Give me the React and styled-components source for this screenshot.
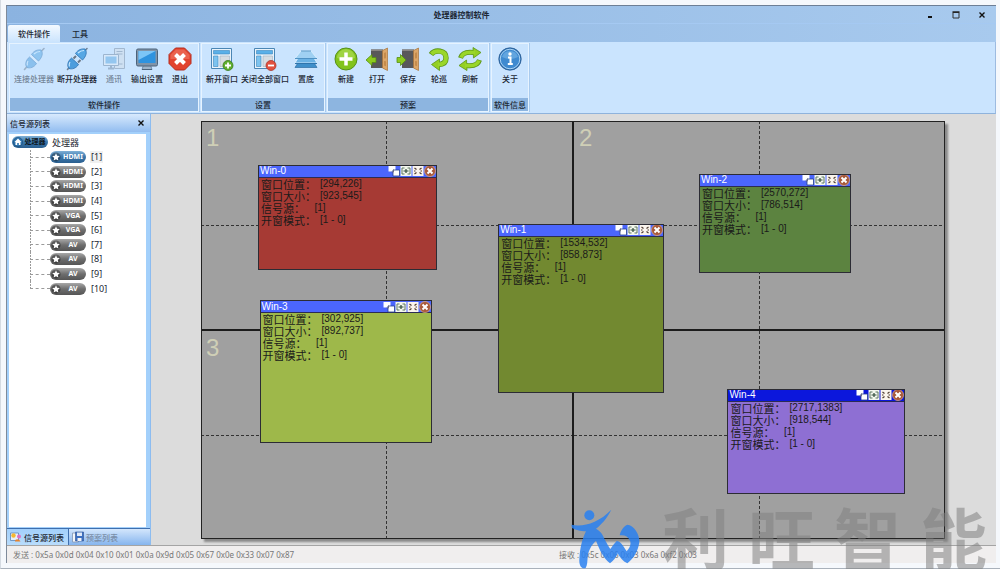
import { useState } from 'react';
import styled, { createGlobalStyle, css } from 'styled-components';

const WALL = { width: 3840, height: 2160 };

const GROUPS = [
  {
    title: '软件操作',
    actions: [
      { label: '连接处理器', icon: <PlugIcon joined />, disabled: true },
      { label: '断开处理器', icon: <PlugIcon /> },
      { label: '通讯', icon: <ComputerIcon />, disabled: true },
      { label: '输出设置', icon: <MonitorIcon /> },
      { label: '退出', icon: <ExitIcon /> },
    ],
  },
  {
    title: '设置',
    actions: [
      { label: '新开窗口', icon: <LayoutIcon add /> },
      { label: '关闭全部窗口', icon: <LayoutIcon /> },
      { label: '置底', icon: <LayersIcon /> },
    ],
  },
  {
    title: '预案',
    actions: [
      { label: '新建', icon: <AddIcon /> },
      { label: '打开', icon: <DoorIcon arrow="M1 13 L7 7.500 V10.500 H11 V15.500 H7 V18.500 Z" /> },
      { label: '保存', icon: <DoorIcon arrow="M10 13 L4.500 7.500 V10.500 H1 V15.500 H4.500 V18.500 Z" /> },
      { label: '轮巡', icon: <CycleIcon /> },
      { label: '刷新', icon: <RefreshIcon /> },
    ],
  },
  { title: '软件信息', actions: [{ label: '关于', icon: <InfoIcon /> }] },
];

const SOURCES = ['HDMI', 'HDMI', 'HDMI', 'HDMI', 'VGA', 'VGA', 'AV', 'AV', 'AV', 'AV'];

const WINDOWS = [
  { name: 'Win-0', x: 294, y: 226, w: 923, h: 545, color: '#a63a34' },
  { name: 'Win-2', x: 2570, y: 272, w: 786, h: 514, color: '#5c8340' },
  { name: 'Win-1', x: 1534, y: 532, w: 858, h: 873, color: '#728930' },
  { name: 'Win-3', x: 302, y: 925, w: 892, h: 737, color: '#9eb84a' },
  { name: 'Win-4', x: 2717, y: 1383, w: 918, h: 544, color: '#8e6fd3' },
];

export default function App() {
  const [tab, setTab] = useState('软件操作');
  const [source, setSource] = useState(0);
  const [active, setActive] = useState('Win-4');

  return (
    <>
      <GlobalStyle />
      <Desktop>
        <Shell>
          <TitleBar>
            <Title>处理器控制软件</Title>
            <TitleButtons>
              <TitleButton aria-label="最小化">
                <svg width="8" height="8">
                  <path d="M2 6h4" stroke="#111" strokeWidth="2" />
                </svg>
              </TitleButton>
              <TitleButton aria-label="最大化">
                <svg width="8" height="8">
                  <path d="M1 1.500h6v5.500h-6z" fill="none" stroke="#333" />
                  <path d="M.5 1h7" stroke="#222" strokeWidth="1.500" />
                </svg>
              </TitleButton>
              <TitleButton aria-label="关闭">
                <CrossMark />
              </TitleButton>
            </TitleButtons>
          </TitleBar>
          <RibbonTabs>
            {['软件操作', '工具'].map((name) => (
              <RibbonTab key={name} $active={name === tab} onClick={() => setTab(name)}>
                {name}
              </RibbonTab>
            ))}
          </RibbonTabs>
          <Ribbon>
            {GROUPS.map(({ title, actions }) => (
              <Group key={title}>
                <Actions>
                  {actions.map(({ label, icon, disabled }) => (
                    <Action key={label} disabled={disabled}>
                      {icon}
                      {label}
                    </Action>
                  ))}
                </Actions>
                <GroupTitle>{title}</GroupTitle>
              </Group>
            ))}
          </Ribbon>
          <Workspace>
            <Sidebar>
              <SidebarHeader>
                信号源列表
                <CloseButton aria-label="关闭列表">
                  <CrossMark />
                </CloseButton>
              </SidebarHeader>
              <Tree>
                <TreeRoot>
                  <Badge $active $dark>
                    <HomeIcon />
                    <BadgeText>处理器</BadgeText>
                  </Badge>
                  处理器
                </TreeRoot>
                <Branches>
                  {SOURCES.map((type, i) => (
                    <Branch key={i}>
                      <SourceButton onClick={() => setSource(i)}>
                        <Badge $active={i === source}>
                          <StarIcon />
                          <BadgeText>{type}</BadgeText>
                        </Badge>
                        <SourceNumber $active={i === source}>[{i + 1}]</SourceNumber>
                      </SourceButton>
                    </Branch>
                  ))}
                </Branches>
              </Tree>
              <SidebarTabs>
                <SidebarTab $active>
                  <SourceListIcon />
                  信号源列表
                </SidebarTab>
                <SidebarTab>
                  <PlanListIcon />
                  预案列表
                </SidebarTab>
              </SidebarTabs>
            </Sidebar>
            <Stage>
              <Wall>
                {[1, 2, 3, 4].map((n) => (
                  <Screen key={n}>{n}</Screen>
                ))}
                {WINDOWS.map((win) => (
                  <VideoWindow key={win.name} win={win} active={win.name === active} onSelect={setActive} />
                ))}
              </Wall>
            </Stage>
          </Workspace>
          <StatusBar>
            <span>发送 : 0x5a 0x0d 0x04 0x10 0x01 0x0a 0x9d 0x05 0x67 0x0e 0x33 0x07 0x87</span>
            <span>接收 : 0x5c 0x06 0x03 0x6a 0xf2 0x03</span>
          </StatusBar>
        </Shell>
      </Desktop>
      <Watermark>
        <WatermarkLogo />
        <WatermarkText>
          {['利', '旺', '智', '能'].map((char) => (
            <span key={char}>{char}</span>
          ))}
        </WatermarkText>
      </Watermark>
    </>
  );
}

function VideoWindow({ win, active, onSelect }) {
  const { name, x, y, w, h, color } = win;
  const place = {
    left: `${(x / WALL.width) * 100}%`,
    top: `${(y / WALL.height) * 100}%`,
    width: `${(w / WALL.width) * 100}%`,
    height: `${(h / WALL.height) * 100}%`,
  };

  return (
    <WindowBox style={place} $color={color} onMouseDown={() => onSelect(name)}>
      <WindowTitle $active={active}>
        <WindowName>{name}</WindowName>
        <WindowButton aria-label="置底">
          <svg width="12" height="12" viewBox="0 0 12 12">
            <path d="M.5 1h7v5.500h-7z" fill="#fff" />
            <path d="M5 5h6.500v6h-6.500z" fill="#fff" stroke="#24408f" strokeWidth=".8" />
            <path d="M5.500 4.500v2.500h-2" fill="none" stroke="#667" strokeWidth=".8" />
          </svg>
        </WindowButton>
        <WindowButton aria-label="全屏">
          <svg width="12" height="12" viewBox="0 0 12 12">
            <path d="M.5 1h11v10h-11z" fill="#f4f8ee" />
            <path d="M4.500 3h-2.500v6h2.500M7.500 3h2.500v6h-2.500" fill="none" stroke="#5d7763" />
            <path d="M3.500 6h5M6 4v4" stroke="#2e4a38" strokeWidth="1.200" />
          </svg>
        </WindowButton>
        <WindowButton aria-label="还原">
          <svg width="12" height="12" viewBox="0 0 12 12">
            <path d="M.5 1h11v10h-11z" fill="#fbf5ee" />
            <path d="M2.500 3l2 1.500M9.500 3l-2 1.500M2.500 9l2-1.500M9.500 9l-2-1.500" stroke="#4d3a30" strokeWidth="1.200" />
            <path d="M2 6h1.500M8.500 6h1.500" stroke="#4d3a30" />
          </svg>
        </WindowButton>
        <WindowButton aria-label="关闭">
          <svg width="12" height="12" viewBox="0 0 12 12">
            <circle cx="6" cy="6" r="5.500" fill="#a8583a" stroke="#e0b090" strokeWidth=".7" />
            <path d="M3.500 3.500l5 5M8.500 3.500l-5 5" stroke="#fff" strokeWidth="2" />
          </svg>
        </WindowButton>
      </WindowTitle>
      <WindowInfo>
        <InfoRow>
          窗口位置：<Value>[{x},{y}]</Value>
        </InfoRow>
        <InfoRow>
          窗口大小：<Value>[{w},{h}]</Value>
        </InfoRow>
        <InfoRow>
          信号源：<Value>{'  [1]'}</Value>
        </InfoRow>
        <InfoRow>
          开窗模式：<Value>[1 - 0]</Value>
        </InfoRow>
      </WindowInfo>
    </WindowBox>
  );
}

function CrossMark() {
  return (
    <svg width="8" height="8" viewBox="0 0 8 8">
      <path d="M1.500 1.500l5 5M6.500 1.500l-5 5" stroke="#111" strokeWidth="1.400" />
    </svg>
  );
}

function PlugIcon({ joined }) {
  const shift = joined ? 0 : 1;
  return (
    <svg width="24" height="24" viewBox="0 0 24 24">
      <path d="M2.500 22.500L6 18.500M18 5.500L22 1.500" stroke="#6f8296" strokeWidth="1.600" strokeLinecap="round" />
      <g transform={`translate(${shift} ${-shift})`} stroke="#2b6fae" strokeWidth=".8">
        <path d="M9.500 7.500C12 3.500 16 2.500 19 3C21.500 6 20 10.500 16.500 14Z" fill="#56a7e4" />
        <path d="M12 7C14 5 16 4.500 18 4.500" fill="none" stroke="#c9e8ff" strokeWidth="1.200" />
      </g>
      <g transform={`translate(${-shift} ${shift})`} stroke="#2b6fae" strokeWidth=".8">
        <path d="M7.500 10L14.500 16.500C12 20.500 8 21.500 5 20.500C2.500 17.500 4 13 7.500 10Z" fill="#4c9ddd" />
        <path d="M6 14C5 15.500 5 17 5.300 18.500" fill="none" stroke="#c9e8ff" strokeWidth="1.200" />
      </g>
      {!joined && <path d="M8.500 11.500L11 9M13 15.500L15.500 13" stroke="#6b7785" strokeWidth="2" />}
      {joined && <path d="M8.500 8.500L15.500 15.500" stroke="#e2f2ff" strokeWidth="1.200" />}
    </svg>
  );
}

function ComputerIcon() {
  return (
    <svg width="24" height="24" viewBox="0 0 24 24">
      <path d="M12.500 1.500h10v20h-10z" fill="#d3dde8" stroke="#7b8ea3" />
      <path d="M14.500 4.500h6M14.500 7h6M14.500 17h6" stroke="#7b8ea3" />
      <path d="M1.500 7.500h15v11h-15z" fill="#e6edf5" stroke="#7088a2" />
      <path d="M3.500 9.500h11v7h-11z" fill="#5fa9e2" />
      <path d="M6 21.500h6M9 19v2" stroke="#7088a2" strokeWidth="2" />
    </svg>
  );
}

function MonitorIcon() {
  return (
    <svg width="24" height="24" viewBox="0 0 24 24">
      <path d="M8.500 18h7l1.500 4.500h-10z" fill="#9fb4c9" stroke="#63809e" strokeWidth=".8" />
      <rect x="1.500" y="2" width="21" height="17" rx="1.500" fill="#8194a8" stroke="#4c637b" />
      <path d="M3.500 4h17v12h-17z" fill="#2f93df" />
      <path d="M3.500 4h17L3.500 13z" fill="#7cc5f7" />
      <path d="M7 22.500h10" stroke="#4c637b" />
    </svg>
  );
}

function ExitIcon() {
  return (
    <svg width="24" height="24" viewBox="0 0 24 24">
      <path d="M7.500 1h9L23 7.500v9L16.500 23h-9L1 16.500v-9z" fill="#e2432f" stroke="#b52c1e" />
      <path d="M8 2.500h8l5.500 5.500v4H2.500V8z" fill="#f07a66" opacity=".6" />
      <path d="M7.500 7.500l9 9M16.500 7.500l-9 9" stroke="#fff" strokeWidth="4" />
    </svg>
  );
}

function LayoutIcon({ add }) {
  return (
    <svg width="24" height="24" viewBox="0 0 24 24">
      <path d="M1.500 1.500h20v20h-20z" fill="#e9f3fb" stroke="#4b86b4" />
      <path d="M3.500 3.500h16v3.500h-16z" fill="#5ab0e8" stroke="#3c86bd" strokeWidth=".6" />
      <path d="M3.500 9h4.500v10.500h-4.500z" fill="#7cc3ef" stroke="#3c86bd" strokeWidth=".6" />
      <path d="M10 9h9.500v10.500h-9.500z" fill="#d7dde2" stroke="#9fb0bf" strokeWidth=".6" />
      <circle cx="18" cy="18.500" r="5" fill={add ? '#5fae2c' : '#e2503f'} stroke={add ? '#39791a' : '#a8362a'} strokeWidth=".8" />
      <path d={add ? 'M15 18.500h6M18 15.500v6' : 'M15 18.500h6'} stroke="#fff" strokeWidth="1.800" />
    </svg>
  );
}

function LayersIcon() {
  return (
    <svg width="24" height="24" viewBox="0 0 24 24">
      <path d="M5 14h14l4 6.500H1z" fill="#3f8fca" stroke="#2d6da2" strokeWidth=".7" />
      <path d="M5 9.500h14l4 6.500H1z" fill="#6bb2e4" stroke="#e2f3ff" strokeWidth=".8" />
      <path d="M1 16.500h22" stroke="#2f75ad" />
      <path d="M7 4h10l6 7.500H1z" fill="#9fd0f2" stroke="#e9f6ff" strokeWidth=".6" />
      <path d="M1 11.500h22M7 4h10" stroke="#4188bd" strokeWidth=".9" />
    </svg>
  );
}

function AddIcon() {
  return (
    <svg width="24" height="24" viewBox="0 0 24 24">
      <circle cx="12" cy="12" r="11" fill="#82c31c" stroke="#56901a" />
      <path d="M3 11a9 9 0 0 1 18 0q-9 3-18 0z" fill="#b2df5b" opacity=".6" />
      <path d="M5.500 12h13M12 5.500v13" stroke="#fff" strokeWidth="3.500" />
    </svg>
  );
}

function DoorIcon({ arrow }) {
  return (
    <svg width="24" height="24" viewBox="0 0 24 24">
      <path d="M6 2.500h12v18.500h-12z" fill="#58585a" />
      <path d="M6 2.500h12v1.500h-12z" fill="#8a8783" />
      <path d="M17.500 3.500L22.500 1v22.500l-5-2.500z" fill="#dca668" stroke="#a77339" strokeWidth=".7" />
      <path d="M19 6l2-.8v6l-2 .3zM19 14l2 .3v5l-2-.8z" fill="#c48b4c" />
      <path d={arrow} fill="#8ccb1e" stroke="#578f13" strokeWidth=".8" />
    </svg>
  );
}

function CycleIcon() {
  return (
    <svg width="24" height="24" viewBox="0 0 24 24">
      <path d="M4 7.500C8 2 19 3 19 11C19 15.500 16 17.500 11.500 17.500" fill="none" stroke="#5c9516" strokeWidth="5.400" />
      <path d="M12.500 12v11.500L4.500 17.500z" fill="#94cf22" stroke="#5c9516" strokeWidth=".8" />
      <path d="M4.500 7C8.500 2.500 19 3.500 19 11C19 15.500 16 17.500 11 17.500" fill="none" stroke="#9ad629" strokeWidth="4" />
    </svg>
  );
}

function RefreshIcon() {
  return (
    <svg width="24" height="24" viewBox="0 0 24 24">
      {[0, 180].map((angle) => (
        <g key={angle} transform={`rotate(${angle} 12 12)`}>
          <path d="M2.500 11C4 6 9 4.500 16 5.500" fill="none" stroke="#5c9516" strokeWidth="5" />
          <path d="M15 .5L23 5.500L15.500 11z" fill="#94cf22" stroke="#5c9516" strokeWidth=".8" />
          <path d="M3 10.500C4.500 6 9.500 4.500 17 5.600" fill="none" stroke="#9ad629" strokeWidth="3.600" />
        </g>
      ))}
    </svg>
  );
}

function InfoIcon() {
  return (
    <svg width="24" height="24" viewBox="0 0 24 24">
      <circle cx="12" cy="12" r="11.200" fill="#2f74b8" stroke="#2a5c92" strokeWidth=".8" />
      <circle cx="12" cy="12" r="9.800" fill="#3f8ad0" stroke="#b8dcf8" strokeWidth=".9" />
      <path d="M4 10a8.300 8.300 0 0 1 16 0q-8 4-16 0z" fill="#7ab8ea" opacity=".6" />
      <circle cx="12" cy="7" r="1.700" fill="#fff" />
      <path d="M10 10.500h2.500v6.500M9.800 17h5" stroke="#fff" strokeWidth="2" fill="none" />
    </svg>
  );
}

function HomeIcon() {
  return (
    <svg width="10" height="10" viewBox="0 0 10 10">
      <circle cx="5" cy="5" r="4.600" fill="#2e74ae" stroke="#1d4d78" strokeWidth=".6" />
      <path d="M5 1.500L8.500 5H7.500v3h-1.700V6H4.200v2H2.500V5h-1z" fill="#fff" />
    </svg>
  );
}

function StarIcon() {
  return (
    <svg width="10" height="10" viewBox="0 0 10 10">
      <circle cx="5" cy="5" r="4.600" fill="rgba(0, 0, 0, .35)" />
      <path d="M5 1.300l1.100 2.500 2.700.3-2 1.800.6 2.600L5 7.200 2.600 8.500l.6-2.600-2-1.800 2.700-.3z" fill="#fff" />
    </svg>
  );
}

function SourceListIcon() {
  return (
    <svg width="12" height="12" viewBox="0 0 12 12">
      <path d="M.5 2h8v7.500h-8z" fill="#e6f0fb" stroke="#5b85b8" strokeWidth=".8" />
      <circle cx="3.500" cy="4.500" r="2.200" fill="#f5b731" />
      <circle cx="9" cy="5.500" r="2" fill="#e06fc0" />
      <path d="M5 10.500c0-3 4-3 5.500 0z" fill="#e8832c" />
    </svg>
  );
}

function PlanListIcon() {
  return (
    <svg width="12" height="12" viewBox="0 0 12 12">
      <path d="M.5 2h6v9h-6z" fill="#f3f6fa" stroke="#8096b2" strokeWidth=".8" />
      <path d="M3.500 1h8v9h-8z" fill="#3c6fc0" stroke="#2b4f8d" strokeWidth=".6" />
      <path d="M5 1.500h5v3.500h-5z" fill="#dfe9f7" />
      <path d="M5.500 7h4v3h-4z" fill="#f4f4f4" />
    </svg>
  );
}

function WatermarkLogo() {
  return (
    <svg width="72" height="61" viewBox="15 10 216 183" fill="#2a80f0" opacity=".85">
      <circle cx="70" cy="32" r="15" />
      <path d="M16 60C50 68 96 56 136 15C122 42 106 60 90 72C94 74 98 77 102 81C110 86 116 108 133 133C139 124 145 116 152 109C163 109 171 122 182 140C192 130 196 118 192 108C186 95 176 90 161 92C163 80 172 65 184 60C204 62 221 88 220 112C216 140 204 160 184 176C170 170 162 158 155 146C150 160 142 168 132 176C112 160 102 138 90 108C76 122 68 136 65 156C64 170 64 182 59 190C46 194 39 182 40 164C42 130 48 104 60 80C44 80 26 75 18 70Z" />
    </svg>
  );
}

const GlobalStyle = createGlobalStyle`
  * {
    box-sizing: border-box;
  }
  body {
    margin: 0;
    background-color: #f5f8fc;
    font-family: 'Noto Sans', 'Noto Sans CJK SC', sans-serif;
    font-size: 8px;
    color: #1c2733;
  }
  button {
    border: 0;
    padding: 0;
    background: none;
    color: inherit;
    font: inherit;
    cursor: pointer;
  }
  svg {
    display: block;
    flex-shrink: 0;
  }
`;

const flexCenter = css`
  display: flex;
  align-items: center;
  justify-content: center;
`;

const Desktop = styled.div`
  min-height: 100vh;
  display: flex;
  padding: 5px 4px 5px 5px;
  border-left: 1px solid #d5dbe2;
  border-bottom: 1px solid #a9b1bb;
`;
const Shell = styled.div`
  flex: 1;
  display: flex;
  flex-direction: column;
  min-width: 0;
  border-top: 1px solid #6d7f96;
  border-left: 1px solid #7e8a9a;
`;
const TitleBar = styled.header`
  display: grid;
  grid-template-columns: 1fr auto 1fr;
  align-items: center;
  height: 18px;
  padding: 0 8px;
  background: linear-gradient(90deg, #8bb3e0, #a8caee);
  border-bottom: 1px solid #a5c9f2;
`;
const Title = styled.h1`
  grid-column: 2;
  margin: 0;
  padding-right: 80px;
  font-size: 8px;
  font-weight: 700;
`;
const TitleButtons = styled.div`
  display: flex;
  justify-content: flex-end;
  gap: 14px;
`;
const TitleButton = styled.button`
  ${flexCenter}
  width: 12px;
  height: 12px;
`;
const RibbonTabs = styled.nav`
  display: flex;
  height: 18px;
  padding: 1px 1px 0;
  background: linear-gradient(90deg, #8bb3e0, #a8caee);
`;
const RibbonTab = styled.button`
  min-width: 40px;
  padding: 0 10px;
  border-radius: 2px 2px 0 0;
  font-weight: 500;
  background: ${({ $active }) => ($active ? 'linear-gradient(#f3f9ff, #cbe4fd)' : 'none')};
`;
const Ribbon = styled.div`
  display: flex;
  gap: 2px;
  height: 72px;
  padding: 1px 2px;
  background-color: #cae4fe;
  border-bottom: 1px solid #8fb3dc;
  border-right: 1px solid #9dbbe0;
`;
const Group = styled.section`
  display: flex;
  flex-direction: column;
  border: 1px solid #e6f3ff;
  box-shadow: 1px 0 0 #a9cbee;
`;
const Actions = styled.div`
  flex: 1;
  display: flex;
  align-items: flex-start;
  gap: 3px;
  padding: 3px 4px 0;
`;
const Action = styled.button`
  display: flex;
  flex-direction: column;
  align-items: center;
  gap: 2px;
  min-width: 28px;
  line-height: 12px;
  font-weight: 500;
  white-space: nowrap;

  &:disabled {
    opacity: 0.5;
    cursor: default;
  }
`;
const GroupTitle = styled.div`
  height: 13px;
  line-height: 13px;
  text-align: center;
  font-weight: 500;
  background-color: #8db5e0;
`;
const Workspace = styled.div`
  flex: 1;
  display: flex;
  background-color: #dcdcdc;
`;
const Sidebar = styled.aside`
  width: 144px;
  display: flex;
  flex-direction: column;
  background-color: #a3d0fb;
  border-right: 1px solid #8cbcf0;
`;
const SidebarHeader = styled.div`
  display: flex;
  align-items: center;
  justify-content: space-between;
  height: 18px;
  padding: 0 3px;
  font-weight: 500;
  background: linear-gradient(#d8eafd, #92bdf0);
`;
const CloseButton = styled.button`
  ${flexCenter}
  width: 12px;
  height: 12px;
`;
const Tree = styled.div`
  flex: 1;
  margin: 2px 4px 1px 2px;
  padding: 1px 3px;
  background-color: #fff;
`;
const TreeRoot = styled.div`
  display: flex;
  align-items: center;
  gap: 4px;
  height: 14px;
  font-size: 9px;
`;
const Branches = styled.ul`
  display: grid;
  grid-auto-rows: 1fr;
  height: 146px;
  margin: 1px 0 0 18px;
  padding: 0;
  list-style: none;
`;
const Branch = styled.li`
  display: flex;
  align-items: center;
  background: repeating-linear-gradient(#9a9a9a 0 2px, transparent 2px 3px) left top / 1px 100% no-repeat;

  &::before {
    content: '';
    width: 20px;
    border-top: 1px dashed #9a9a9a;
  }
  &:last-child {
    background-size: 1px 50%;
  }
`;
const SourceButton = styled.button`
  display: flex;
  align-items: center;
  gap: 4px;
`;
const Badge = styled.span`
  display: flex;
  align-items: center;
  width: 36px;
  height: 12px;
  padding: 0 1px;
  border-radius: 6px;
  color: ${({ $dark }) => ($dark ? '#0f1a26' : '#fff')};
  background: ${({ $active }) =>
    $active ? 'linear-gradient(#7fb0d6, #3a77ac 50%, #2b5f8f)' : 'linear-gradient(#a8a8a8, #6e6e6e 50%, #555)'};
`;
const BadgeText = styled.span`
  flex: 1;
  text-align: center;
  font-size: 7px;
  font-weight: 700;
  line-height: 10px;
`;
const SourceNumber = styled.span`
  padding: 0 1px;
  font-size: 9px;
  line-height: 12px;
  background-color: ${({ $active }) => ($active ? '#f0f0f0' : 'transparent')};
`;
const SidebarTabs = styled.nav`
  display: flex;
  height: 17px;
  border-top: 1px solid #3f6fae;
  background: linear-gradient(#d3e6fc, #86b5ee);
`;
const SidebarTab = styled.button`
  display: flex;
  align-items: center;
  gap: 2px;
  padding: 0 4px 0 3px;
  font-weight: 500;
  color: ${({ $active }) => ($active ? '#1c2733' : '#7a8ea8')};
  background: ${({ $active }) => ($active ? 'linear-gradient(#a3d0fb, #b8dcfc)' : 'none')};
  border-right: ${({ $active }) => ($active ? '1px solid #3f6fae' : '0')};
`;
const Stage = styled.main`
  flex: 1;
  display: flex;
  padding: 7px 51px 6px 50px;
`;
const Wall = styled.div`
  position: relative;
  flex: 1;
  display: grid;
  grid-template: 1fr 1fr / 1fr 1fr;
  gap: 2px;
  outline: 1px solid #222;
  outline-offset: -1px;
  background-color: #1c1c1c;
  box-shadow: 3px 3px 2px #8a8a8a;
`;
const Screen = styled.div`
  padding: 3px 5px;
  font-family: 'Liberation Sans', sans-serif;
  font-size: 24px;
  line-height: 28px;
  color: #cfcfb6;
  background:
    repeating-linear-gradient(90deg, #333 0 3px, transparent 3px 5px) center / 100% 1px no-repeat,
    repeating-linear-gradient(#333 0 3px, transparent 3px 5px) center / 1px 100% no-repeat,
    #a0a0a0;
`;
const WindowBox = styled.section`
  position: absolute;
  overflow: hidden;
  border: 1px solid #2c2c34;
  background-color: ${({ $color }) => $color};
`;
const WindowTitle = styled.div`
  display: flex;
  align-items: center;
  height: 12px;
  background-color: ${({ $active }) => ($active ? '#0c17dc' : '#4b66fd')};
  border-bottom: 1px solid #2c2c54;
`;
const WindowName = styled.h2`
  flex: 1;
  margin: 0;
  padding-left: 1px;
  font-family: 'Liberation Sans', sans-serif;
  font-size: 10px;
  font-weight: 400;
  line-height: 12px;
  color: #fff;
`;
const WindowButton = styled.button`
  width: 12px;
  height: 12px;
`;
const WindowInfo = styled.div`
  padding: 0 2px;
`;
const InfoRow = styled.div`
  display: flex;
  align-items: center;
  gap: 4px;
  height: 12px;
  font-family: 'Noto Sans CJK SC', sans-serif;
  font-size: 11px;
  line-height: 12px;
  color: #1a1a1a;
  white-space: pre;
`;
const Value = styled.span`
  font-family: 'Liberation Sans', sans-serif;
  font-size: 10px;
`;
const StatusBar = styled.footer`
  display: grid;
  grid-template-columns: 19fr 15fr;
  align-items: center;
  height: 18px;
  padding: 0 6px;
  color: #777;
  background-color: #f0eeee;
  border-top: 1px solid #a4a4a4;
`;
const Watermark = styled.div`
  position: fixed;
  right: 13px;
  bottom: 0;
  display: flex;
  align-items: flex-start;
  gap: 19px;
  height: 61px;
  pointer-events: none;
`;
const WatermarkText = styled.div`
  display: flex;
  gap: 19px;
  font-family: 'Noto Sans CJK SC', sans-serif;
  font-size: 67px;
  font-weight: 700;
  line-height: 56px;
  color: rgba(129, 129, 129, 0.55);
`;
